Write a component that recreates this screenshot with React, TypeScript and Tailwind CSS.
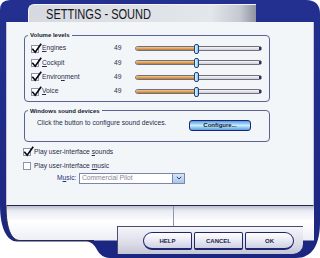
import React from 'react';

const channels = [
  { name: 'Engines', u: 0 },
  { name: 'Cockpit', u: 0 },
  { name: 'Environment', u: 6 },
  { name: 'Voice', u: 0 },
];

function Label({ text, u }: { text: string; u: number }) {
  return (
    <>
      {text.slice(0, u)}
      <u className="underline-offset-[1px]">{text[u]}</u>
      {text.slice(u + 1)}
    </>
  );
}

function Check({ checked }: { checked: boolean }) {
  return (
    <span className="relative block w-[8px] h-[8px] shrink-0 bg-white border border-[#8e93ae]">
      {checked && (
        <svg className="absolute -left-[1px] -top-[3px]" width="11" height="11" viewBox="0 0 11 11">
          <path d="M1.3 5.8 L4.2 9.2 L10.2 0.8" fill="none" stroke="#0a0a14" strokeWidth="1.7" />
        </svg>
      )}
    </span>
  );
}

function Slider() {
  return (
    <div className="relative w-[127px] h-[10px] flex items-center">
      <div className="flex w-full h-[5px] rounded-[3px] border border-[#6e7080] overflow-hidden bg-[linear-gradient(#f6f6f8,#cdced6)]">
        <div className="w-[61px] h-full bg-[linear-gradient(#f5c88e,#dc9a4e_60%,#b97a34)]" />
      </div>
      <span className="absolute left-[59px] top-0 w-[5px] h-[10px] rounded-[2px] border border-[#20407e] bg-[linear-gradient(90deg,#e2f6fd,#8ccbe8)]" />
      <span className="absolute right-[1px] top-[3.5px] w-[2px] h-[3px] bg-[#303060]" />
    </div>
  );
}

export default function App() {
  return (
    <div className="relative w-[320px] h-[258px] overflow-hidden bg-white font-['Liberation_Sans',Arial,sans-serif] text-[#282d4a]">
      {/* window chrome */}
      <svg className="absolute inset-0" width="320" height="258" viewBox="0 0 320 258">
        <defs>
          <linearGradient id="navy" x1="0" y1="0" x2="0" y2="1">
            <stop offset="0" stopColor="#23308f" />
            <stop offset="1" stopColor="#1b2680" />
          </linearGradient>
          <linearGradient id="base" x1="0" y1="0" x2="0" y2="1">
            <stop offset="0" stopColor="#b9bdd2" />
            <stop offset="0.14" stopColor="#e9ebf3" />
            <stop offset="0.45" stopColor="#ffffff" />
            <stop offset="1" stopColor="#eceef5" />
          </linearGradient>
        </defs>
        <path
          d="M10 0 H306 Q320 0 320 14 V222 C320 245 312 258 296 258 H110 C102 258 98 252 96 248 C93 243 90 241.5 85 241.5 H17 C7 241.5 0 228 0 205 V10 Q0 0 10 0 Z"
          fill="url(#navy)"
        />
        <path d="M6 206 H314 V240.5 H20 C11 240.5 6 228 6 206 Z" fill="url(#base)" />
        <path d="M6 206 C6 228 11 240.5 20 240.5 H94" fill="none" stroke="#262a48" strokeWidth="1" />
        <line x1="173.5" y1="206" x2="173.5" y2="226" stroke="#9094ac" strokeWidth="1" />
      </svg>

      <div className="relative flex flex-col">
        {/* title tab */}
        <div className="h-[22px] pl-[28px] pt-[4px]">
          <div className="w-[228px] h-[18px] rounded-tl-[6px] border-t border-l border-[#f2f4f7] bg-[linear-gradient(90deg,#d6dae0_0%,#e3e6ea_80%,#c4c8d0_93%,#8f93a2_100%)] flex items-center pl-[17px]">
            <span className="inline-block origin-left scale-x-[0.79] text-[14px] leading-none text-[#15161f] font-['Liberation_Sans',sans-serif] whitespace-nowrap">
              SETTINGS - SOUND
            </span>
          </div>
        </div>

        {/* main panel */}
        <div className="mx-[6px] h-[184px] bg-[#f3f6f9] border-l border-r border-b border-l-[#c2c6d6] border-r-[#c2c6d6] border-b-[#262a44] text-[6.7px] leading-none">
          <fieldset className="mt-[9px] ml-[17px] w-[246px] border border-[#5c6294] rounded-[4px] pl-[3px] pt-[2.5px] pb-[2px]">
            <legend className="px-[2px] text-[6px] leading-[8px] font-bold text-[#14172a]">Volume levels</legend>
            {channels.map(c => (
              <div key={c.name} className="flex items-center h-[14.3px] pl-[3px]">
                <Check checked />
                <span className="ml-[3px] w-[72px]">
                  <Label text={c.name} u={c.u} />
                </span>
                <span className="w-[21px]">49</span>
                <Slider />
              </div>
            ))}
          </fieldset>

          <fieldset className="mt-[5px] ml-[17px] w-[246px] border border-[#5c6294] rounded-[4px] pl-[3px] pt-[5px] pb-[10px]">
            <legend className="px-[2px] text-[6px] leading-[8px] font-bold text-[#14172a]">Windows sound devices</legend>
            <div className="flex items-center h-[11px]">
              <span className="ml-[9px] mb-[3px] w-[152px]">Click the button to configure sound devices.</span>
              <button className="w-[62px] h-[11px] rounded-[3px] border border-[#1a2478] bg-[linear-gradient(#5d9be0,#c6efff_50%,#5d9be0)] text-[6px] font-bold text-[#10122a] leading-none">
                Configure...
              </button>
            </div>
          </fieldset>

          <div className="flex items-center h-[12px] mt-[4.8px] ml-[16px]">
            <Check checked />
            <span className="ml-[3px]">
              Play user-interface <Label text="sounds" u={0} />
            </span>
          </div>
          <div className="flex items-center h-[12px] mt-[2px] ml-[16px]">
            <Check checked={false} />
            <span className="ml-[3px]">
              Play user-interface <Label text="music" u={0} />
            </span>
          </div>
          <div className="flex items-center h-[11px] mt-[0.5px] ml-[50px]">
            <span className="w-[22px] text-[#24307a]">
              <Label text="Music:" u={1} />
            </span>
            <div className="flex h-[11px]">
              <div className="w-[94px] h-full bg-white border border-[#7c84b0] flex items-center pl-[2px] text-[#85878f]">
                Commercial Pilot
              </div>
              <div className="w-[12px] h-full border border-l-0 border-[#7c84b0] bg-[linear-gradient(#d6e6f6,#a9c6e8)] flex items-center justify-center">
                <svg width="6" height="4" viewBox="0 0 6 4">
                  <path d="M0.8 0.8 L3 3 L5.2 0.8" fill="none" stroke="#2a3a80" strokeWidth="1" />
                </svg>
              </div>
            </div>
          </div>
        </div>

        {/* bottom buttons */}
        <div className="h-[52px] pl-[117px] pt-[20px]">
          <div className="w-[186px] h-[28px] border-t border-l border-[#4a4e6a] rounded-br-[10px] bg-[linear-gradient(#f4f4f9,#dcdde8_60%,#c4c6d6)] flex gap-[2px] pl-[25px] pt-[5px]">
            {['HELP', 'CANCEL', 'OK'].map((b, i) => (
              <button
                key={b}
                className={
                  'w-[49px] h-[18px] border border-b-2 border-[#1e2670] bg-[linear-gradient(#ffffff,#e8e9f3_50%,#cfd1e4)] text-[6px] font-bold text-[#1a1f48] leading-none ' +
                  (i === 0 ? 'rounded-l-[9px] rounded-r-[2px]' : i === 2 ? 'rounded-r-[9px] rounded-l-[2px]' : 'rounded-[2px]')
                }
              >
                {b}
              </button>
            ))}
          </div>
        </div>
      </div>
    </div>
  );
}
